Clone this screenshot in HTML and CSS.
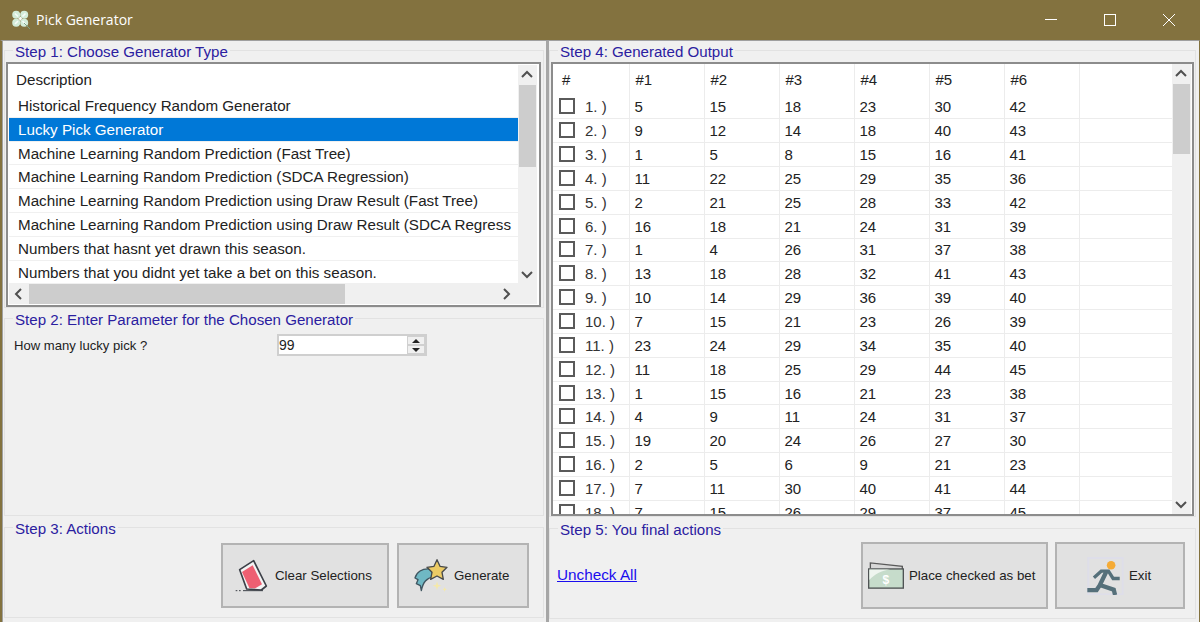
FILE: index.html
```html
<!DOCTYPE html>
<html lang="en">
<head>
    <meta charset="UTF-8">
    <meta name="viewport" content="width=device-width, initial-scale=1.0">
    <link rel="stylesheet" href="styles.css">
    <title>Pick Generator</title>
</head>
<body>
    <div class="titlebar">
        <svg class="app-icon" width="20" height="20" viewBox="0 0 20 20">
            <g fill="#d3ecd9">
                <circle cx="5.200" cy="4.700" r="4"/>
                <circle cx="13.200" cy="4.700" r="4"/>
                <circle cx="5.200" cy="12.700" r="4"/>
                <circle cx="13.200" cy="12.700" r="4"/>
            </g>
            <path d="M4 3.500l3 3M14.500 3.500l-3 3M4 14l3-3M14.500 14l-3-3" stroke="#f8fcf9" stroke-width="1.600"/>
            <path d="M9.200 7v3.400M7.500 8.700h3.400" stroke="#f8fcf9" stroke-width="1.600"/>
            <path d="M9.200 0v2.500M9.200 15v3M0 8.700h2.500M16 8.700h2.500" stroke="#83723f" stroke-width="1.200"/>
            <path d="M13 13l6 6" stroke="#7fa184" stroke-width="1"/>
        </svg>
        <span class="app-name">Pick Generator</span>
        <div class="win-controls">
            <svg width="14" height="14" viewBox="0 0 14 14"><path d="M1 6.500h12" stroke="#fff" fill="none"/></svg>
            <svg width="14" height="14" viewBox="0 0 14 14"><rect x="1.500" y="1.500" width="11" height="11" stroke="#fff" fill="none"/></svg>
            <svg width="14" height="14" viewBox="0 0 14 14"><path d="M1 1l12 12M13 1L1 13" stroke="#fff" fill="none"/></svg>
        </div>
    </div>

    <div class="main">
        <div class="column left">
            <div class="group step1">
                <div class="group-title">Step 1: Choose Generator Type</div>
                <div class="listbox">
                    <div class="list-items">
                        <div class="list-head">Description</div>
                        <div class="list-row">Historical Frequency Random Generator</div>
                        <div class="list-row selected">Lucky Pick Generator</div>
                        <div class="list-row">Machine Learning Random Prediction (Fast Tree)</div>
                        <div class="list-row">Machine Learning Random Prediction (SDCA Regression)</div>
                        <div class="list-row">Machine Learning Random Prediction using Draw Result (Fast Tree)</div>
                        <div class="list-row">Machine Learning Random Prediction using Draw Result (SDCA Regress</div>
                        <div class="list-row">Numbers that hasnt yet drawn this season.</div>
                        <div class="list-row">Numbers that you didnt yet take a bet on this season.</div>
                    </div>
                    <div class="vscroll">
                        <svg class="arrow" width="18" height="20" viewBox="0 0 18 20"><path d="M4 12l5-5 5 5" stroke="#505050" stroke-width="2" fill="none"/></svg>
                        <div class="vthumb list-thumb"></div>
                        <svg class="arrow push" width="18" height="20" viewBox="0 0 18 20"><path d="M4 8l5 5 5-5" stroke="#505050" stroke-width="2" fill="none"/></svg>
                    </div>
                    <div class="hscroll">
                        <svg class="arrow" width="20" height="20" viewBox="0 0 20 20"><path d="M12 5l-5 5 5 5" stroke="#505050" stroke-width="2" fill="none"/></svg>
                        <div class="hthumb"></div>
                        <svg class="arrow push" width="20" height="20" viewBox="0 0 20 20"><path d="M8 5l5 5-5 5" stroke="#505050" stroke-width="2" fill="none"/></svg>
                    </div>
                    <div class="corner"></div>
                </div>
            </div>

            <div class="group step2">
                <div class="group-title">Step 2: Enter Parameter for the Chosen Generator</div>
                <div class="param-row">
                    <span class="param-label">How many lucky pick ?</span>
                    <div class="spinner">
                        <span class="spinner-value">99</span>
                        <div class="spinner-btns">
                            <span class="spin-btn"><span class="tri-up"></span></span>
                            <span class="spin-btn"><span class="tri-down"></span></span>
                        </div>
                    </div>
                </div>
            </div>

            <div class="group step3">
                <div class="group-title">Step 3: Actions</div>
                <div class="actions">
                    <button class="btn btn-clear">
                        <svg width="35" height="35" viewBox="100 150 105 105">
                            <path d="M120 185l42-27 38 76-15 12-44-3z" fill="#f4f4f4" stroke="#3c4048" stroke-width="5" stroke-linejoin="round"/>
                            <path d="M127 192l32-20 28 57-20 12-18-1z" fill="#ee5f72"/>
                            <path d="M108 248h5M118 248h5M130 248h60" stroke="#3c4048" stroke-width="3" fill="none"/>
                        </svg>
                        <span>Clear Selections</span>
                    </button>
                    <button class="btn btn-generate">
                        <svg width="35" height="35" viewBox="640 145 105 105">
                            <path d="M692 178C667 175 650 188 646 205l9 5-5 12 12 6 3 15C670 217 680 206 703 200z" fill="#6fb8c4" stroke="#3f5560" stroke-width="4" stroke-linejoin="round"/>
                            <path d="M712 150l9 20 21 3-15 15 4 21-19-10-19 10 4-21-15-15 21-3z" fill="#eccb65" stroke="#47494a" stroke-width="4" stroke-linejoin="round"/>
                            <path d="M712 215l3 10 10 3-10 3-3 10-3-10-10-3 10-3z" fill="#f5e9a8"/>
                            <path d="M735 232l2 5 5 2-5 2-2 5-2-5-5-2 5-2z" fill="#f5e9a8"/>
                        </svg>
                        <span>Generate</span>
                    </button>
                </div>
            </div>
        </div>

        <div class="splitter"></div>

        <div class="column right">
            <div class="group step4">
                <div class="group-title">Step 4: Generated Output</div>
                <div class="gridbox">
                    <div class="grid-clip">
                        <table class="numbers">
                            <thead>
                                <tr><th class="first-col">#</th><th>#1</th><th>#2</th><th>#3</th><th>#4</th><th>#5</th><th>#6</th><th class="filler"></th></tr>
                            </thead>
                            <tbody>
                                <tr><td class="first-col"><span class="check"></span>1. )</td><td>5</td><td>15</td><td>18</td><td>23</td><td>30</td><td>42</td><td class="filler"></td></tr>
                                <tr><td class="first-col"><span class="check"></span>2. )</td><td>9</td><td>12</td><td>14</td><td>18</td><td>40</td><td>43</td><td class="filler"></td></tr>
                                <tr><td class="first-col"><span class="check"></span>3. )</td><td>1</td><td>5</td><td>8</td><td>15</td><td>16</td><td>41</td><td class="filler"></td></tr>
                                <tr><td class="first-col"><span class="check"></span>4. )</td><td>11</td><td>22</td><td>25</td><td>29</td><td>35</td><td>36</td><td class="filler"></td></tr>
                                <tr><td class="first-col"><span class="check"></span>5. )</td><td>2</td><td>21</td><td>25</td><td>28</td><td>33</td><td>42</td><td class="filler"></td></tr>
                                <tr><td class="first-col"><span class="check"></span>6. )</td><td>16</td><td>18</td><td>21</td><td>24</td><td>31</td><td>39</td><td class="filler"></td></tr>
                                <tr><td class="first-col"><span class="check"></span>7. )</td><td>1</td><td>4</td><td>26</td><td>31</td><td>37</td><td>38</td><td class="filler"></td></tr>
                                <tr><td class="first-col"><span class="check"></span>8. )</td><td>13</td><td>18</td><td>28</td><td>32</td><td>41</td><td>43</td><td class="filler"></td></tr>
                                <tr><td class="first-col"><span class="check"></span>9. )</td><td>10</td><td>14</td><td>29</td><td>36</td><td>39</td><td>40</td><td class="filler"></td></tr>
                                <tr><td class="first-col"><span class="check"></span>10. )</td><td>7</td><td>15</td><td>21</td><td>23</td><td>26</td><td>39</td><td class="filler"></td></tr>
                                <tr><td class="first-col"><span class="check"></span>11. )</td><td>23</td><td>24</td><td>29</td><td>34</td><td>35</td><td>40</td><td class="filler"></td></tr>
                                <tr><td class="first-col"><span class="check"></span>12. )</td><td>11</td><td>18</td><td>25</td><td>29</td><td>44</td><td>45</td><td class="filler"></td></tr>
                                <tr><td class="first-col"><span class="check"></span>13. )</td><td>1</td><td>15</td><td>16</td><td>21</td><td>23</td><td>38</td><td class="filler"></td></tr>
                                <tr><td class="first-col"><span class="check"></span>14. )</td><td>4</td><td>9</td><td>11</td><td>24</td><td>31</td><td>37</td><td class="filler"></td></tr>
                                <tr><td class="first-col"><span class="check"></span>15. )</td><td>19</td><td>20</td><td>24</td><td>26</td><td>27</td><td>30</td><td class="filler"></td></tr>
                                <tr><td class="first-col"><span class="check"></span>16. )</td><td>2</td><td>5</td><td>6</td><td>9</td><td>21</td><td>23</td><td class="filler"></td></tr>
                                <tr><td class="first-col"><span class="check"></span>17. )</td><td>7</td><td>11</td><td>30</td><td>40</td><td>41</td><td>44</td><td class="filler"></td></tr>
                                <tr><td class="first-col"><span class="check"></span>18. )</td><td>7</td><td>15</td><td>26</td><td>29</td><td>37</td><td>45</td><td class="filler"></td></tr>
                            </tbody>
                        </table>
                    </div>
                    <div class="vscroll">
                        <svg class="arrow" width="18" height="20" viewBox="0 0 18 20"><path d="M4 12l5-5 5 5" stroke="#505050" stroke-width="2" fill="none"/></svg>
                        <div class="vthumb grid-thumb"></div>
                        <svg class="arrow push" width="18" height="20" viewBox="0 0 18 20"><path d="M4 8l5 5 5-5" stroke="#505050" stroke-width="2" fill="none"/></svg>
                    </div>
                </div>
            </div>

            <div class="group step5">
                <div class="group-title">Step 5: You final actions</div>
                <div class="actions final">
                    <a class="uncheck" href="#">Uncheck All</a>
                    <button class="btn btn-place">
                        <svg width="37" height="29" viewBox="50 155 110 85">
                            <path d="M60 176v-16l95 10v8" fill="#d8d8d8" stroke="#5a5a5a" stroke-width="4"/>
                            <rect x="55" y="178" width="103" height="57" fill="#c6dccb" stroke="#4f5354" stroke-width="4"/>
                            <path d="M57 233v-22c14-16 36-28 62-31H57z" fill="#eef5ef"/>
                            <text x="106" y="222" class="dollar">$</text>
                        </svg>
                        <span>Place checked as bet</span>
                    </button>
                    <button class="btn btn-exit">
                        <svg width="37" height="38" viewBox="710 135 110 115">
                            <rect x="713" y="138" width="104" height="110" fill="none" stroke="#dedee9" stroke-width="6"/>
                            <circle cx="782" cy="160" r="13" fill="#f5ab35"/>
                            <path d="M730 198l22-20h22l14 22h20" stroke="#55707a" stroke-width="10" fill="none"/>
                            <path d="M768 178l-20 42 42 14 4 16M748 220l-10 15h-28" stroke="#55707a" stroke-width="13" fill="none"/>
                        </svg>
                        <span>Exit</span>
                    </button>
                </div>
            </div>
        </div>
    </div>
</body>
</html>
```

FILE: styles.css
```css
html, body {
    margin: 0;
    height: 100%;
    overflow: hidden;
}

body {
    width: 1200px;
    height: 622px;
    background-color: #f0f0f0;
    font-family: "Liberation Sans", Arial, sans-serif;
    font-size: 14px;
    color: #222222;
}

.titlebar {
    display: flex;
    align-items: center;
    height: 40px;
    box-sizing: border-box;
    padding-left: 11px;
    background-color: #83723f;
    color: #ffffff;
}

.app-name {
    margin-left: 5px;
    padding-bottom: 2px;
    font-family: "Open Sans", sans-serif;
    font-size: 14px;
}

.win-controls {
    display: flex;
    gap: 45px;
    margin-left: auto;
    margin-right: 24px;
}

.main {
    display: flex;
    height: 582px;
    border-left: 2px solid #83723f;
    border-right: 1px solid #83723f;
    border-top: 1px solid #a0a0a0;
    box-sizing: border-box;
}

.column {
    display: flex;
    flex-direction: column;
    box-sizing: border-box;
    padding-top: 9px;
}

.left {
    width: 543px;
    padding-left: 1px;
    padding-right: 1px;
    border-left: 1px solid #a0a0a0;
}

.right {
    width: 650px;
    padding-right: 3px;
}

.splitter {
    width: 3px;
    margin-left: 1px;
    background-color: #a6a6a6;
}

.group {
    border: 1px solid #e2e2e2;
    box-sizing: border-box;
}

.group-title {
    width: fit-content;
    height: 16px;
    margin: -7px 0 0 8px;
    padding: 0 2px;
    background-color: #f0f0f0;
    color: #2b20a0;
    font-size: 15.100px;
    line-height: 16px;
}

.step1 {
    height: 258px;
}

.step1 .group-title, .step4 .group-title {
    margin-bottom: 2px;
}

.step2 {
    height: 198px;
    margin-top: 10px;
}

.step3, .step5 {
    height: 91px;
    margin-top: 11px;
}

.step4 {
    height: 467px;
}

/* generator list */
.listbox {
    display: grid;
    grid-template-columns: 1fr 19px;
    grid-template-rows: 1fr 20px;
    height: 245px;
    margin: 0 2px 0 1px;
    box-sizing: border-box;
    padding: 1px 2px 1px 1px;
    border: 2px solid #8c8c8c;
    background-color: #ffffff;
}

.list-items {
    overflow: hidden;
    white-space: nowrap;
    font-size: 15.200px;
}

.list-head {
    height: 29px;
    padding-left: 7px;
    line-height: 30px;
}

.list-row {
    height: 23.800px;
    box-sizing: border-box;
    padding-left: 9px;
    border-bottom: 1px solid #f0f0f0;
    line-height: 23px;
}

.list-row.selected {
    background-color: #0078d7;
    color: #ffffff;
}

.vscroll {
    display: flex;
    flex-direction: column;
    background-color: #f0f0f0;
}

.hscroll {
    display: flex;
    background-color: #f0f0f0;
}

.arrow {
    flex: none;
}

.push {
    margin-top: auto;
}

.hscroll .push {
    margin-top: 0;
    margin-left: auto;
    margin-right: 2px;
}

.vthumb {
    margin: 0 1px;
    background-color: #cdcdcd;
}

.list-thumb {
    height: 82px;
}

.grid-thumb {
    height: 70px;
}

.hthumb {
    width: 316px;
    background-color: #cdcdcd;
}

.corner {
    background-color: #f0f0f0;
}

/* parameter row */
.param-row {
    display: flex;
    align-items: center;
    margin-top: 6px;
    padding-left: 9px;
}

.param-label {
    width: 263px;
    font-size: 13.100px;
}

.spinner {
    display: flex;
    width: 150px;
    height: 22px;
    box-sizing: border-box;
    border: 2px solid #cfcfcf;
    background-color: #ffffff;
}

.spinner-value {
    flex: 1;
    font-size: 14px;
    line-height: 18px;
}

.spinner-btns {
    display: flex;
    flex-direction: column;
    width: 18px;
    background-color: #f0f0f0;
}

.spin-btn {
    display: flex;
    flex: 1;
    align-items: center;
    justify-content: center;
    border: 1px solid #d0d0d0;
}

.tri-up, .tri-down {
    width: 0;
    height: 0;
    border-left: 4px solid transparent;
    border-right: 4px solid transparent;
}

.tri-up {
    border-bottom: 4px solid #222222;
}

.tri-down {
    border-top: 4px solid #222222;
}

/* output grid */
.gridbox {
    display: flex;
    height: 454px;
    margin: 0 1px;
    box-sizing: border-box;
    border: 2px solid #8c8c8c;
    background-color: #ffffff;
}

.grid-clip {
    flex: 1;
    overflow: hidden;
}

.gridbox .vscroll {
    width: 19px;
    margin-right: 1px;
}

.numbers {
    border-collapse: collapse;
    table-layout: fixed;
    width: 100%;
    font-size: 15px;
}

.numbers th, .numbers td {
    width: 75px;
    box-sizing: border-box;
    padding: 0 0 0 5px;
    border-right: 1px solid #ececec;
    font-weight: normal;
    text-align: left;
}

.numbers th {
    height: 31px;
    padding-left: 6px;
}

.numbers td {
    height: 23.850px;
    border-bottom: 1px solid #ececec;
}

.numbers .first-col {
    width: 76px;
    padding-left: 9px;
}

.numbers td.first-col {
    color: #333333;
    padding-left: 6px;
}

.numbers .filler {
    width: auto;
    border-right: none;
}

.check {
    display: inline-block;
    width: 16px;
    height: 16px;
    margin-right: 10px;
    border: 2px solid #5a5a5a;
    box-sizing: border-box;
    vertical-align: -2px;
    background-color: #ffffff;
}

/* buttons */
.actions {
    display: flex;
    align-items: flex-end;
    justify-content: flex-end;
    gap: 8px;
    height: 71px;
    padding-right: 14px;
}

.final {
    gap: 7px;
    padding-right: 10px;
}

.uncheck {
    margin-right: auto;
    margin-left: 7px;
    margin-bottom: 25px;
    color: #1a0dee;
    font-size: 15.300px;
}

.btn {
    display: flex;
    align-items: center;
    box-sizing: border-box;
    padding: 0;
    border: 2px solid #b3b3b3;
    background-color: #e1e1e1;
    color: #222222;
    font-family: "Liberation Sans", Arial, sans-serif;
    font-size: 13.300px;
}

.btn-clear {
    width: 168px;
    height: 65px;
    padding-left: 10px;
    gap: 7px;
}

.btn-generate {
    width: 132px;
    height: 65px;
    padding-left: 14px;
    gap: 6px;
}

.btn-place {
    width: 187px;
    height: 67px;
    padding-left: 4px;
    gap: 5px;
}

.btn-exit {
    width: 130px;
    height: 67px;
    padding-left: 30px;
    gap: 5px;
}

.dollar {
    fill: #ffffff;
    font-size: 36px;
    font-weight: bold;
    text-anchor: middle;
}
```
